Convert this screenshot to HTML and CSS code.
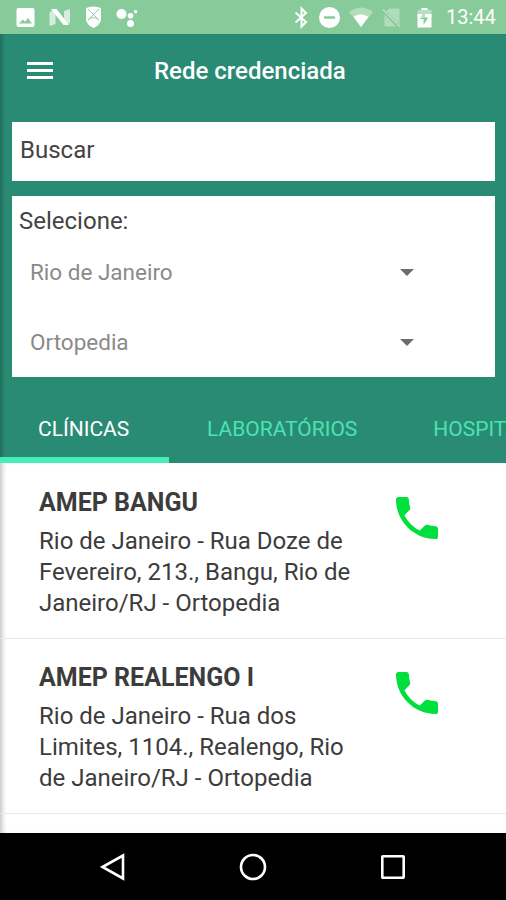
FILE: index.html
```html
<!DOCTYPE html>
<html lang="pt-BR">
<head>
  <meta charset="UTF-8" />
  <meta name="viewport" content="width=device-width, initial-scale=1" />
  <title>Rede credenciada</title>
  <link rel="stylesheet" href="styles.css">
</head>
<body>
  <div class="screen">
    <!-- BARRA DE STATUS -->
    <div class="status-bar">
      <svg class="status-left" width="124" height="34" viewBox="16 0 124 34" fill="#fff">
        <path fill-rule="evenodd" d="M18.500 8h14q2 0 2 2v15q0 2-2 2h-14q-2 0-2-2v-15q0-2 2-2zM19 23.500h13l-4-5.500-3 3.800-2.200-2.300z"/>
        <path opacity=".65" d="M49.500 12l6-2v14l-6 2zM64 11l6-2v14l-6 2z"/>
        <path d="M51 9h5.500l12.500 16h-5.500z"/>
        <path d="M86 8q7.500-3 15 0v12q-1 5-7.500 8-6.500-3-7.500-8z"/>
        <path d="M88 9l11 11M99 9l-11 11M88 20q5.500-5 11 0" fill="none" stroke="#87cb9a" stroke-width=".9"/>
        <circle cx="121.500" cy="14" r="5"/>
        <circle cx="130.500" cy="15.800" r="2.800"/>
        <circle cx="135.600" cy="11.700" r="1.700"/>
        <circle cx="130.500" cy="23.500" r="3.500"/>
      </svg>
      <svg class="status-right" width="138" height="34" viewBox="294 0 138 34" fill="#fff">
        <path d="M295.500 12.500l10.500 9.500-4.500 4.500v-18l4.500 4.500-10.500 9.500" fill="none" stroke="#fff" stroke-width="2"/>
        <path fill-rule="evenodd" d="M329.500 7a10.500 10.500 0 1 0 0 21 10.500 10.500 0 0 0 0-21zM324 16.200h11v2.600h-11z"/>
        <path opacity=".35" d="M349 12q12-9 24 0l-12 15z"/>
        <path d="M353.500 16.800q7.500-5 15 0l-7.500 10.200z"/>
        <path opacity=".35" d="M389 8.500h10.500v15.500l-13-13zM384.500 14.500l11.500 12h-11.500z"/>
        <path d="M383 9.500l17 17" fill="none" stroke="#fff" stroke-width="1.600" opacity=".45"/>
        <path opacity=".4" d="M417.500 10h4v-2h6v2h4v8h-14z"/>
        <path fill-rule="evenodd" d="M417.500 14h5l-2.500 5h3.500v6l5-8h-3.500v-3h6.500v13.500h-14z"/>
        <path d="M421.500 8h6v2h-6z"/>
      </svg>
      <span class="clock">13:44</span>
    </div>

    <!-- CABECALHO E FILTROS -->
    <header class="header">
      <div class="app-bar">
        <div class="menu"><span></span><span></span><span></span></div>
        <h1>Rede credenciada</h1>
      </div>

      <div class="search">Buscar</div>

      <div class="filters">
        <div class="filters-label">Selecione:</div>
        <div class="select"><span>Rio de Janeiro</span><i class="arrow"></i></div>
        <div class="select"><span>Ortopedia</span><i class="arrow"></i></div>
      </div>

      <nav class="tabs">
        <div class="tab active">CLÍNICAS</div>
        <div class="tab">LABORATÓRIOS</div>
        <div class="tab">HOSPITAIS</div>
      </nav>
    </header>

    <!-- LISTA -->
    <main class="list">
      <div class="item">
        <div class="info">
          <h2>AMEP BANGU</h2>
          <p>Rio de Janeiro - Rua Doze de<br>Fevereiro, 213., Bangu, Rio de<br>Janeiro/RJ - Ortopedia</p>
        </div>
        <svg class="phone" viewBox="3 3 18 18"><path d="M6.620 10.790c1.440 2.830 3.760 5.140 6.590 6.590l2.200-2.200c.27-.27.67-.36 1.020-.24 1.120.37 2.330.57 3.570.57.55 0 1 .45 1 1V20c0 .55-.45 1-1 1-9.390 0-17-7.610-17-17 0-.55.45-1 1-1h3.500c.55 0 1 .45 1 1 0 1.250.2 2.450.57 3.570.11.35.03.74-.25 1.020l-2.200 2.200z"/></svg>
      </div>
      <div class="item">
        <div class="info">
          <h2>AMEP REALENGO I</h2>
          <p>Rio de Janeiro - Rua dos<br>Limites, 1104., Realengo, Rio<br>de Janeiro/RJ - Ortopedia</p>
        </div>
        <svg class="phone" viewBox="3 3 18 18"><path d="M6.620 10.790c1.440 2.830 3.760 5.140 6.590 6.590l2.200-2.200c.27-.27.67-.36 1.020-.24 1.120.37 2.330.57 3.570.57.55 0 1 .45 1 1V20c0 .55-.45 1-1 1-9.390 0-17-7.610-17-17 0-.55.45-1 1-1h3.500c.55 0 1 .45 1 1 0 1.250.2 2.450.57 3.570.11.35.03.74-.25 1.020l-2.200 2.200z"/></svg>
      </div>
    </main>

    <!-- NAVEGACAO DO SISTEMA -->
    <footer class="nav-bar">
      <svg width="28" height="28" viewBox="0 0 28 28"><path d="M3.500 14L24 2.500v23z"/></svg>
      <svg width="28" height="28" viewBox="0 0 28 28"><circle cx="14" cy="14" r="12"/></svg>
      <svg width="28" height="28" viewBox="0 0 28 28"><rect x="3.300" y="3.300" width="21.400" height="21.400" rx=".5"/></svg>
    </footer>
  </div>
</body>
</html>
```

FILE: styles.css
```css
* {
  box-sizing: border-box;
}

body {
  margin: 0;
  font-family: Roboto, 'Liberation Sans', sans-serif;
  background: #fff;
}

.screen {
  width: 506px;
  height: 900px;
  display: flex;
  flex-direction: column;
  overflow: hidden;
}

.status-bar {
  height: 34px;
  flex: none;
  display: flex;
  align-items: center;
  padding: 0 11px 0 16px;
  background: #87cb9a;
}

.status-right {
  margin-left: auto;
}

.clock {
  width: 49px;
  margin-left: 14px;
  font-size: 20px;
  line-height: 34px;
  color: #fff;
  white-space: nowrap;
}

.header {
  height: 429px;
  flex: none;
  background: #2a8b74;
  box-shadow: inset 5px 0 5px -3px rgba(0, 0, 0, 0.25);
}

.app-bar {
  height: 88px;
  padding: 0 27px;
  display: flex;
  gap: 101px;
}

.menu {
  width: 26px;
  padding-top: 28px;
  display: flex;
  flex-direction: column;
  gap: 4px;
}

.menu span {
  height: 3px;
  background: #fff;
}

h1 {
  margin: 0;
  padding-top: 20px;
  font-size: 24px;
  font-weight: 500;
  line-height: 34px;
  color: #fff;
  white-space: nowrap;
}

.search {
  height: 59px;
  margin: 0 11px 15px 12px;
  padding-left: 8px;
  background: #fff;
  color: #444;
  font-size: 24px;
  line-height: 56px;
}

.filters {
  height: 181px;
  margin: 0 11px 0 12px;
  padding: 7px 0 0 7px;
  background: #fff;
}

.filters-label {
  height: 34px;
  font-size: 24px;
  line-height: 36px;
  color: #444;
}

.select {
  height: 70px;
  width: 395px;
  padding-left: 11px;
  display: flex;
  align-items: center;
  justify-content: space-between;
  font-size: 22.500px;
  color: #8a8a8a;
}

.arrow {
  border: 7px solid transparent;
  border-top-color: #6d6d6d;
  border-bottom: 0;
}

.tabs {
  height: 86px;
  display: flex;
  overflow: hidden;
}

.tab {
  flex: none;
  padding: 36px 38px 0;
  font-size: 21px;
  line-height: 32px;
  color: #4be3b2;
}

.tab.active {
  width: 169px;
  color: #fff;
  border-bottom: 6px solid #46edb8;
}

.list {
  height: 370px;
  flex: none;
  background: #fff;
  box-shadow: inset 5px 0 5px -3px rgba(0, 0, 0, 0.25);
}

.item {
  height: 175px;
  padding: 22px 68px 0 39px;
  display: flex;
  justify-content: space-between;
  border-bottom: 0;
  box-shadow: 0 1px 0 #e8e8e8;
}

.info {
  white-space: nowrap;
}

h2 {
  margin: 0 0 5px;
  font-size: 25px;
  font-weight: 700;
  line-height: 36px;
  color: #3c3c3c;
}

p {
  margin: 0;
  font-size: 24px;
  line-height: 31px;
  color: #3c3c3c;
}

.phone {
  width: 42px;
  height: 42px;
  margin-top: 12px;
  fill: #00e03c;
}

.nav-bar {
  height: 67px;
  flex: none;
  display: flex;
  align-items: center;
  justify-content: center;
  gap: 112px;
  background: #000;
}

.nav-bar svg {
  fill: none;
  stroke: #fff;
  stroke-width: 2.600;
}
```
